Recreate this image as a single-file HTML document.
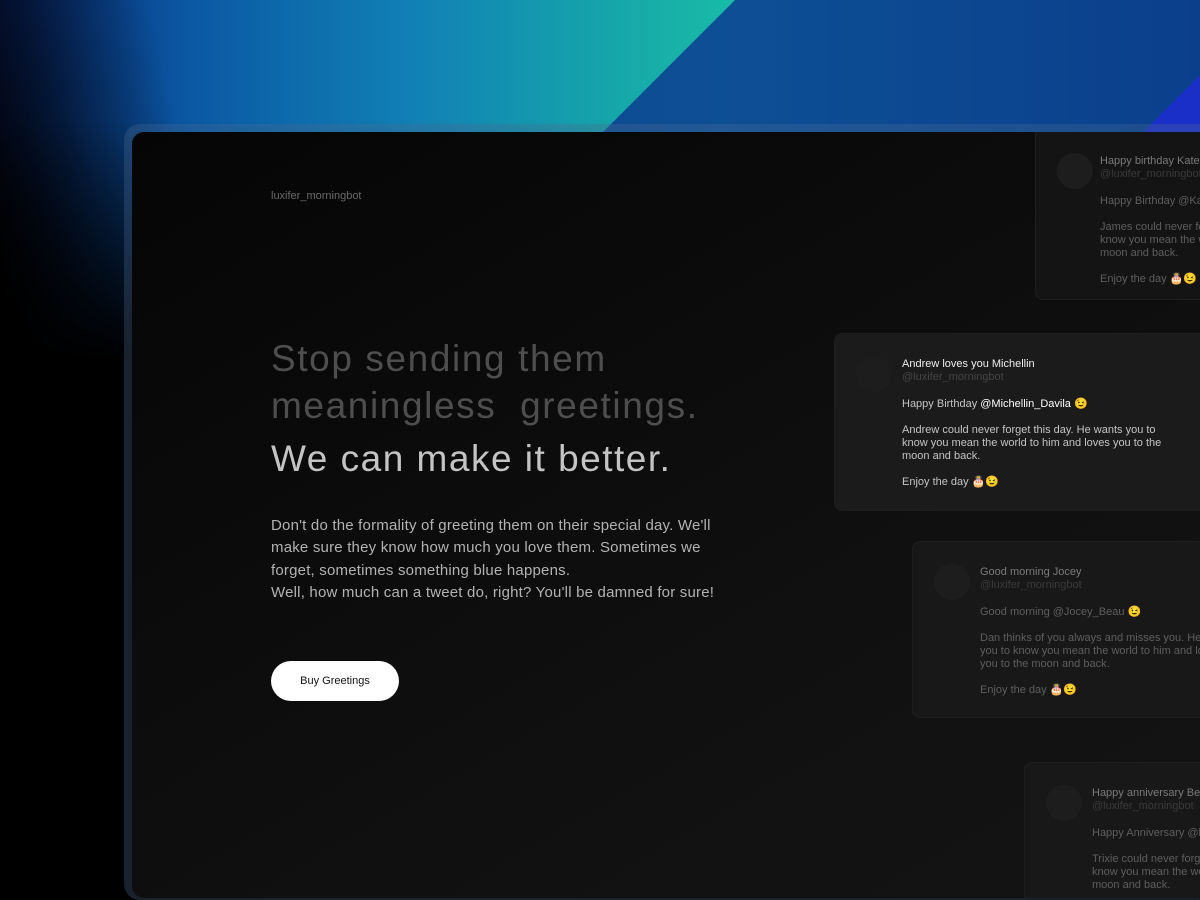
<!DOCTYPE html>
<html><head><meta charset="utf-8"><style>
*{margin:0;padding:0;box-sizing:border-box}
html,body{width:1200px;height:900px;overflow:hidden}
body{position:relative;background:#000;font-family:"Liberation Sans",sans-serif}
.bg{position:absolute;left:0;top:0;width:1200px;height:900px;
background:
linear-gradient(180deg,rgba(0,0,0,0) 0,rgba(0,0,0,0) 120px,#000 360px),
radial-gradient(ellipse 260px 700px at -60px 420px,rgba(0,0,0,1) 30%,rgba(0,0,0,0) 100%),
linear-gradient(90deg,#081e5a 0,#0a3f8a 90px,#0b5aa5 200px,#1182b5 420px,#17ada8 650px,#19bba8 735px);}
.dark{position:absolute;left:0;top:0;width:1200px;height:300px;background:linear-gradient(90deg,#0b3d80,#0d4f95 60%,#0b3f8c);clip-path:polygon(735px 0,1200px 0,1200px 300px,435px 300px);}
.blue2{position:absolute;left:0;top:0;width:1200px;height:300px;background:#1a2fc8;clip-path:polygon(1200px 75px,1200px 300px,975px 300px);}
.frame{position:absolute;left:124px;top:124px;width:1090px;height:776px;border-radius:16px;background:rgba(80,110,150,0.3)}
.panel{position:absolute;left:132px;top:132px;width:1080px;height:766px;border-radius:12px;background:linear-gradient(150deg,#050505 0,#0c0c0c 40%,#111 70%,#141414 100%);overflow:hidden}
.logo{position:absolute;left:139px;top:58px;color:#6a6a6a;font-size:11px}
h1{position:absolute;left:139px;top:203px;font-weight:normal;font-size:37px;line-height:47px;color:#4e4e4e;letter-spacing:1.6px;white-space:nowrap}
h2{position:absolute;left:139px;top:306px;font-weight:normal;font-size:37px;color:#c4c4c4;letter-spacing:1.5px;white-space:nowrap}
p.body{position:absolute;left:139px;top:383px;font-size:15px;line-height:22.3px;color:#b3b3b3;width:450px;letter-spacing:0.2px}
.btn{position:absolute;left:139px;top:529px;width:128px;height:40px;border-radius:20px;background:#fff;color:#111;font-size:11px;text-align:center;line-height:40px}
.card{position:absolute;border-radius:8px;background:#181818;border:1px solid #1e1e1e;color:#5e5e5e;font-size:11px;line-height:13px;padding:24px 0 0 67px}
.card .av{position:absolute;left:21px;top:22px;width:36px;height:36px;border-radius:50%;background:#1d1d1d}
.card .t{color:#7a7a7a}
.card .h{color:#3a3a3a;margin-bottom:14px}
.card p{margin-bottom:13px;white-space:nowrap}
.bright{background:#1b1b1b;color:#c4c4c4}
.bright .t{color:#eee}.bright .h{color:#444}.bright b{color:#fff;font-weight:normal}
</style></head><body>
<div class="bg"></div><div class="dark"></div><div class="blue2"></div>
<div class="frame"></div>
<div class="panel">
<div class="logo">luxifer_morningbot</div>
<h1>Stop sending them<br>meaningless &nbsp;greetings.</h1>
<h2>We can make it better.</h2>
<p class="body">Don't do the formality of greeting them on their special day. We'll make sure they know how much you love them. Sometimes we forget, sometimes something blue happens.<br>Well, how much can a tweet do, right? You'll be damned for sure!</p>
<div class="btn">Buy Greetings</div>

<div class="card" style="left:903px;top:-20px;width:200px;height:188px;background:#141414;padding-top:42px;padding-left:64px">
<div class="av" style="top:40px"></div>
<div class="t">Happy birthday Katey</div><div class="h">@luxifer_morningbot</div>
<p>Happy Birthday @Katey</p>
<p>James could never forget<br>know you mean the wo<br>moon and back.</p>
<p>Enjoy the day 🎂😉</p></div>

<div class="card bright" style="left:702px;top:201px;width:400px;height:178px">
<div class="av"></div>
<div class="t">Andrew loves you Michellin</div><div class="h">@luxifer_morningbot</div>
<p>Happy Birthday <b>@Michellin_Davila</b> 😉</p>
<p>Andrew could never forget this day. He wants you to<br>know you mean the world to him and loves you to the<br>moon and back.</p>
<p>Enjoy the day 🎂😉</p></div>

<div class="card" style="left:780px;top:409px;width:320px;height:177px">
<div class="av"></div>
<div class="t">Good morning Jocey</div><div class="h">@luxifer_morningbot</div>
<p>Good morning @Jocey_Beau 😉</p>
<p>Dan thinks of you always and misses you. He wants<br>you to know you mean the world to him and loves<br>you to the moon and back.</p>
<p>Enjoy the day 🎂😉</p></div>

<div class="card" style="left:892px;top:630px;width:220px;height:180px">
<div class="av"></div>
<div class="t">Happy anniversary Ben</div><div class="h">@luxifer_morningbot</div>
<p>Happy Anniversary @ben</p>
<p>Trixie could never forget<br>know you mean the wo<br>moon and back.</p>
<p>Enjoy the day 🎂😉</p></div>
</div>
</body></html>
